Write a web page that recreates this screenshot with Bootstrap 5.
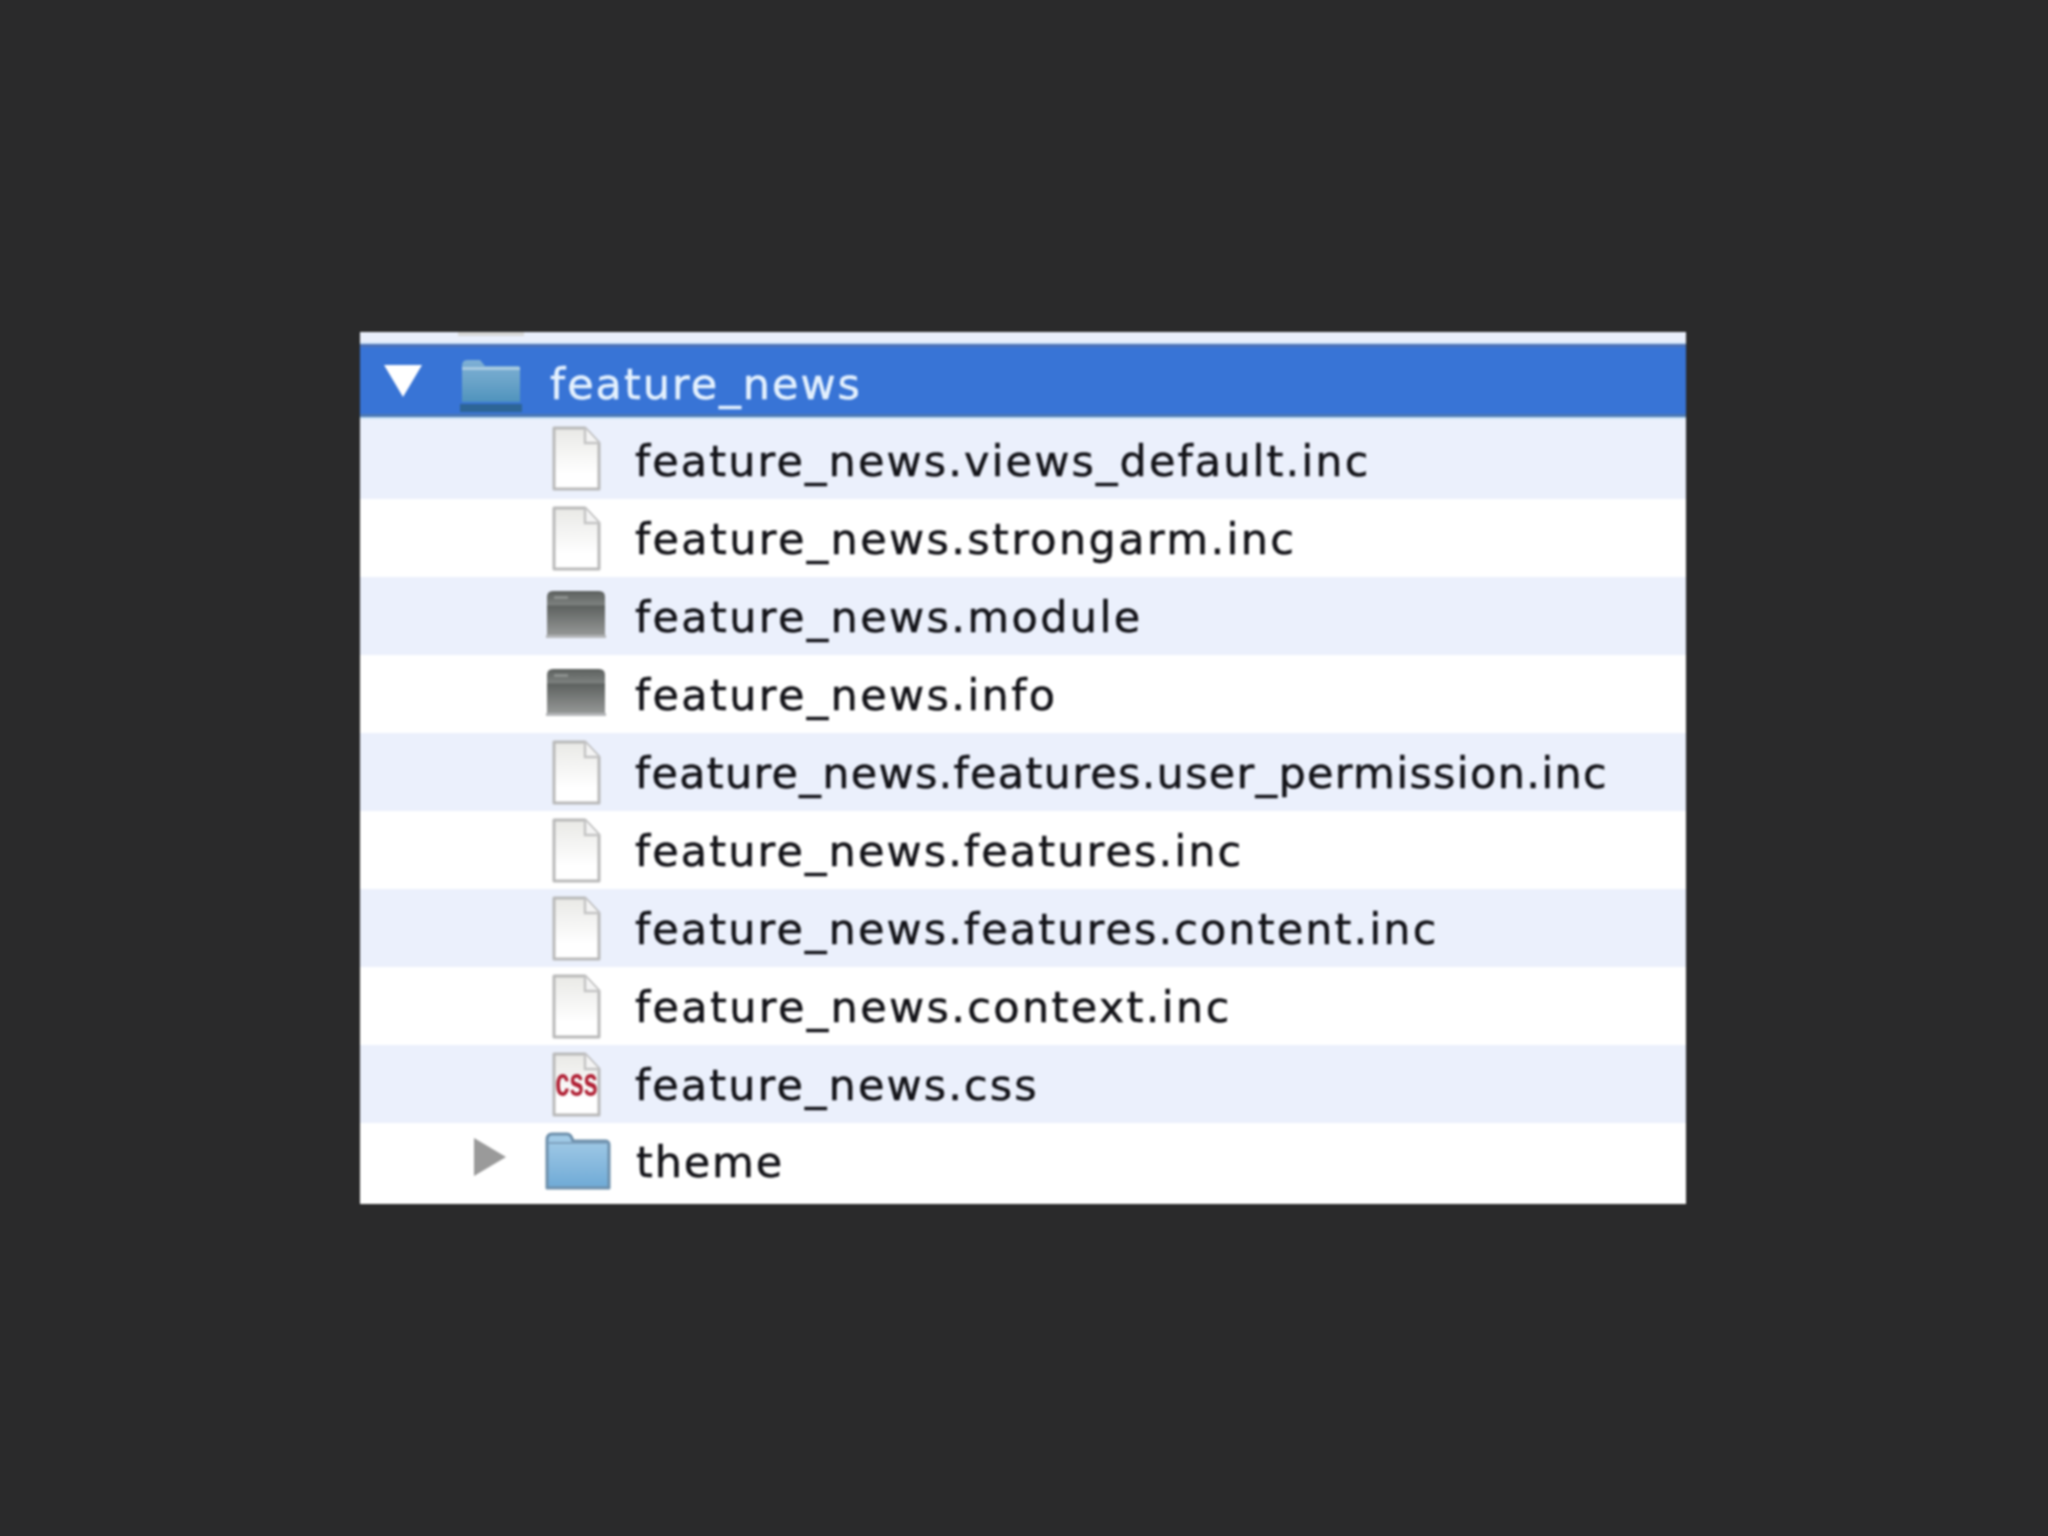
<!doctype html>
<html lang="en"><head><meta charset="utf-8"><title>feature_news</title>
<link href="https://cdn.jsdelivr.net/npm/bootstrap@5.3.0/dist/css/bootstrap.min.css" rel="stylesheet">
<style>
body{background:#2a2a2b;}
.stage{padding-right:2px;}
.tree{width:1326px;background:#fff;font-family:"DejaVu Sans",sans-serif;font-size:43px;letter-spacing:2.1px;-webkit-text-stroke:.5px currentColor;color:#131318;filter:blur(.8px);overflow:hidden;}
.strip{height:12px;background:#e9effc;position:relative;}
.strip::after{content:"";position:absolute;left:98px;top:0;width:66px;height:4px;background:#d8d8d8;}
.rw{display:flex;align-items:center;height:78px;padding-left:182px;white-space:nowrap;}
.rw.alt{background:#ebf0fc;}
.rw.first{height:82px;}
.rw.last{height:81px;padding-left:114px;}
.rw.sel{height:73px;padding-left:24px;background:#3874d6;color:#e4f1fe;border-top:3px solid #4d73b8;border-bottom:3px solid #4c78b4;box-shadow:0 -2px 0 #cfe3f8,0 2px 0 #c5e0f6;position:relative;}
.cell{width:68px;flex:none;display:flex;justify-content:center;}
.arrow{flex:none;display:block;}
.sel .arrow{margin-right:36px;}
.last .arrow{margin-right:36px;margin-bottom:14px;}
.sel .cell{width:66px;margin-right:26px;padding-top:8px;}
.rw .name{margin-left:25px;padding-top:2px;}
.first .name{padding-top:6px;}
.cell.mod{padding-bottom:4px;}
.sel .name{margin-left:0;padding-top:8px;letter-spacing:2px;}
.last .name{margin-left:0;padding-top:0;padding-bottom:3px;letter-spacing:1.8px;}
.last .cell{width:70px;margin-right:24px;padding-bottom:6px;padding-left:2px;}
.wide{letter-spacing:2.35px;}
.tight{letter-spacing:1.3px;}
.cssicon{overflow:visible;}
</style></head><body>
<svg width="0" height="0" class="position-absolute"><defs>
<linearGradient id="pg" x1="0" y1="0" x2="0" y2="1"><stop offset="0" stop-color="#e9e9e6"/><stop offset=".75" stop-color="#fff"/></linearGradient>
<linearGradient id="mg" x1="0" y1="0" x2="0" y2="1"><stop offset="0" stop-color="#5c605e"/><stop offset=".3" stop-color="#7c807e"/><stop offset=".34" stop-color="#5e6260"/><stop offset="1" stop-color="#979998"/></linearGradient>
<linearGradient id="fg" x1="0" y1="0" x2="0" y2="1"><stop offset="0" stop-color="#a6cde8"/><stop offset="1" stop-color="#6faad6"/></linearGradient>
<linearGradient id="sf" x1="0" y1="0" x2="0" y2="1"><stop offset="0" stop-color="#7fb0d6"/><stop offset=".5" stop-color="#6ba4c9"/><stop offset="1" stop-color="#4f93bd"/></linearGradient>
<symbol id="doc" viewBox="0 0 49 65"><path d="M2 2H33L47 17V63H2Z" fill="url(#pg)" stroke="#b9b9b9" stroke-width="3" stroke-linejoin="round"/><path d="M33 2V17H47" fill="#f4f4f4" stroke="#c4c4c4" stroke-width="2.5"/></symbol>
<symbol id="mod" viewBox="0 0 60 48"><path d="M1 46V7Q1 1 7 1H53Q59 1 59 7V46Z" fill="url(#mg)"/><rect x="8" y="6" width="14" height="3" fill="#8b8f8d"/><rect x="0" y="45" width="60" height="3" fill="#b4b6b8"/></symbol>
</defs></svg>
<div class="stage d-flex align-items-center justify-content-center min-vh-100">
<div class="tree">
<div class="strip"></div>
<div class="rw sel">
<svg class="arrow" width="38" height="32" viewBox="0 0 38 32"><path d="M0 0H38L19 32Z" fill="#fff"/></svg>
<span class="cell"><svg width="62" height="54" viewBox="0 0 62 54"><path d="M2 8Q2 2 7 2H20L25 8H58Q60 8 60 12V44H2Z" fill="url(#sf)"/><rect x="2" y="9" width="58" height="3" fill="#a9cbe2"/><rect x="0" y="46" width="62" height="8" fill="#2d6596"/></svg></span>
<span class="name">feature_news</span></div>
<div class="rw alt first"><span class="cell"><svg width="49" height="65"><use href="#doc"/></svg></span><span class="name">feature_news.views_default.inc</span></div>
<div class="rw"><span class="cell"><svg width="49" height="65"><use href="#doc"/></svg></span><span class="name wide">feature_news.strongarm.inc</span></div>
<div class="rw alt"><span class="cell mod"><svg width="60" height="48"><use href="#mod"/></svg></span><span class="name wide">feature_news.module</span></div>
<div class="rw"><span class="cell mod"><svg width="60" height="48"><use href="#mod"/></svg></span><span class="name wide">feature_news.info</span></div>
<div class="rw alt"><span class="cell"><svg width="49" height="65"><use href="#doc"/></svg></span><span class="name tight">feature_news.features.user_permission.inc</span></div>
<div class="rw"><span class="cell"><svg width="49" height="65"><use href="#doc"/></svg></span><span class="name">feature_news.features.inc</span></div>
<div class="rw alt"><span class="cell"><svg width="49" height="65"><use href="#doc"/></svg></span><span class="name">feature_news.features.content.inc</span></div>
<div class="rw"><span class="cell"><svg width="49" height="65"><use href="#doc"/></svg></span><span class="name wide">feature_news.context.inc</span></div>
<div class="rw alt"><span class="cell"><svg class="cssicon" width="49" height="65" viewBox="0 0 49 65"><use href="#doc" width="49" height="65"/><text transform="translate(24.5 44) scale(.64 1)" text-anchor="middle" font-family="Liberation Sans,sans-serif" font-weight="700" font-size="40" letter-spacing="0" fill="#b01f33" stroke="none">css</text></svg></span><span class="name">feature_news.css</span></div>
<div class="rw last"><svg class="arrow" width="32" height="38" viewBox="0 0 32 38"><path d="M0 0L32 19L0 38Z" fill="#9a9a9a"/></svg><span class="cell"><svg width="66" height="58" viewBox="0 0 66 58"><path d="M2 8Q2 2 7 2H22Q26 2 28 9H60Q64 9 64 13V56H2Z" fill="url(#fg)" stroke="#6d8fab" stroke-width="3" stroke-linejoin="round"/><path d="M3 11H63" stroke="#7fa2bf" stroke-width="2"/></svg></span><span class="name">theme</span></div>
</div></div>
<script src="https://cdn.jsdelivr.net/npm/bootstrap@5.3.0/dist/js/bootstrap.bundle.min.js"></script>
</body></html>
